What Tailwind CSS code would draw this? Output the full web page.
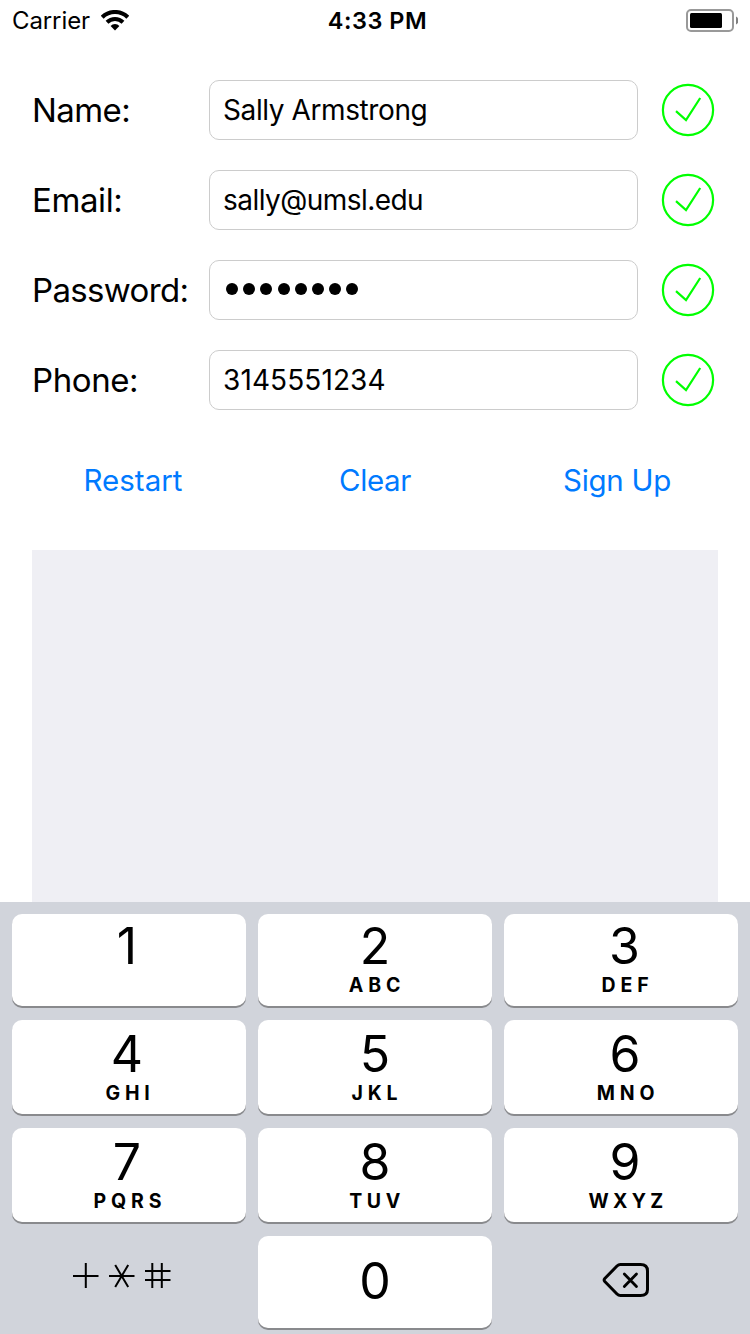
<!DOCTYPE html>
<html lang="en">
<head>
<meta charset="utf-8">
<title>Sign Up</title>
<script src="https://cdn.jsdelivr.net/npm/@tailwindcss/browser@4"></script>
</head>
<body class="flex h-[1334px] w-[750px] flex-col overflow-hidden bg-white font-['Inter','Liberation_Sans',sans-serif] text-black">
<header class="grid h-10 shrink-0 grid-cols-3 items-start pl-3 pr-3 text-[24px] leading-[42px]">
  <div class="flex items-start gap-[11px]">
    <span class="tracking-[-0.1px]">Carrier</span>
    <svg class="mt-[9.5px] h-[21px] w-[28px]" viewBox="0 0 28 21" fill="none" stroke="#000"><path d="M1.2 7.2A18.3 18.3 0 0 1 26.8 7.2" stroke-width="4.1"/><path d="M6 12.2A11.5 11.5 0 0 1 22 12.2" stroke-width="4"/><path d="M9.6 16A6 6 0 0 1 18.4 16L14 20.4Z" fill="#000" stroke="none"/></svg>
  </div>
  <div class="pl-[5px] text-center text-[23.5px] font-semibold leading-[41px] tracking-[0.5px]">4:33 PM</div>
  <svg class="mt-2 h-6 w-[54px] justify-self-end" viewBox="0 0 54 24"><rect x="3" y="2" width="46" height="21" rx="4" fill="none" stroke="#999" stroke-width="2"/><rect x="6" y="5" width="32" height="15" rx="1.5"/><path d="M52 8.5Q54.7 10 54.7 12.5T52 16.5Z" fill="#808080"/></svg>
</header>
<main class="flex h-[862px] shrink-0 flex-col px-8 pt-10">
  <div class="flex flex-col gap-[30px]">
    <div class="flex h-[60px] items-center">
      <div class="w-[177px] pt-0.5 text-[33px] tracking-[-0.6px]">Name:</div>
      <div class="flex h-[60px] w-[429px] items-center rounded-[10px] border border-[#ccc] px-[13px] text-[28px] tracking-[-0.4px]"><span>Sally Armstrong</span></div>
      <svg class="ml-[23px] size-[54px]" viewBox="0 0 54 54" fill="none" stroke="#0f0" stroke-width="2.2"><circle cx="27" cy="27" r="25.1"/><path d="M15 28.2L25 37L39.2 15"/></svg>
    </div>
    <div class="flex h-[60px] items-center">
      <div class="w-[177px] pt-0.5 text-[33px] tracking-[-0.4px]">Email:</div>
      <div class="flex h-[60px] w-[429px] items-center rounded-[10px] border border-[#ccc] px-[13px] text-[28px] tracking-[-0.55px]"><span>sally@umsl.edu</span></div>
      <svg class="ml-[23px] size-[54px]" viewBox="0 0 54 54" fill="none" stroke="#0f0" stroke-width="2.2"><circle cx="27" cy="27" r="25.1"/><path d="M15 28.2L25 37L39.2 15"/></svg>
    </div>
    <div class="flex h-[60px] items-center">
      <div class="w-[177px] pt-0.5 text-[33px] tracking-[-0.65px]">Password:</div>
      <div class="flex h-[60px] w-[429px] items-center gap-[5.2px] rounded-[10px] border border-[#ccc] px-4 pb-0.5">
        <i class="size-3 rounded-full bg-black"></i><i class="size-3 rounded-full bg-black"></i><i class="size-3 rounded-full bg-black"></i><i class="size-3 rounded-full bg-black"></i><i class="size-3 rounded-full bg-black"></i><i class="size-3 rounded-full bg-black"></i><i class="size-3 rounded-full bg-black"></i><i class="size-3 rounded-full bg-black"></i>
      </div>
      <svg class="ml-[23px] size-[54px]" viewBox="0 0 54 54" fill="none" stroke="#0f0" stroke-width="2.2"><circle cx="27" cy="27" r="25.1"/><path d="M15 28.2L25 37L39.2 15"/></svg>
    </div>
    <div class="flex h-[60px] items-center">
      <div class="w-[177px] pt-0.5 text-[33px] tracking-[-0.4px]">Phone:</div>
      <div class="flex h-[60px] w-[429px] items-center rounded-[10px] border border-[#ccc] px-[13px] text-[28px] tracking-[0.1px]"><span>3145551234</span></div>
      <svg class="ml-[23px] size-[54px]" viewBox="0 0 54 54" fill="none" stroke="#0f0" stroke-width="2.2"><circle cx="27" cy="27" r="25.1"/><path d="M15 28.2L25 37L39.2 15"/></svg>
    </div>
  </div>
  <div class="mt-10 -mx-[20px] grid h-[60px] grid-cols-3 items-center text-center text-[29.5px] text-[#007aff]">
    <span>Restart</span><span class="tracking-[-0.4px]">Clear</span><span class="tracking-[-0.3px]">Sign Up</span>
  </div>
  <div class="mt-10 flex-1 bg-[#efeff4]"></div>
</main>
<section class="grid h-[432px] shrink-0 grid-cols-3 grid-rows-[92px_94px_94px_92px] gap-x-3 bg-[#d1d4db] px-3 pt-3 text-center [row-gap:14px]">
  <div class="rounded-[10px] bg-white pt-1.5 pr-1 shadow-[0_2px_0_#898a8d]"><div class="text-[50px] leading-[52px]">1</div></div>
  <div class="rounded-[10px] bg-white pt-1.5 shadow-[0_2px_0_#898a8d]"><div class="text-[50px] leading-[52px]">2</div><div class="pl-1 text-[19.5px] font-bold leading-[27px] tracking-[4.8px]">ABC</div></div>
  <div class="rounded-[10px] bg-white pt-1.5 pl-[7px] shadow-[0_2px_0_#898a8d]"><div class="text-[50px] leading-[52px]">3</div><div class="pl-[6px] text-[19.5px] font-bold leading-[27px] tracking-[4.8px]">DEF</div></div>
  <div class="rounded-[10px] bg-white pt-2 pr-1 shadow-[0_2px_0_#898a8d]"><div class="text-[50px] leading-[52px]">4</div><div class="pl-[6px] text-[19.5px] font-bold leading-[27px] tracking-[4.8px]">GHI</div></div>
  <div class="rounded-[10px] bg-white pt-2 shadow-[0_2px_0_#898a8d]"><div class="text-[50px] leading-[52px]">5</div><div class="pl-1 text-[19.5px] font-bold leading-[27px] tracking-[4.8px]">JKL</div></div>
  <div class="rounded-[10px] bg-white pt-2 pl-[8px] shadow-[0_2px_0_#898a8d]"><div class="text-[50px] leading-[52px]">6</div><div class="pl-[6px] text-[19.5px] font-bold leading-[27px] tracking-[4.8px]">MNO</div></div>
  <div class="rounded-[10px] bg-white pt-2 pr-1 shadow-[0_2px_0_#898a8d]"><div class="text-[50px] leading-[52px]">7</div><div class="pl-[6px] text-[19.5px] font-bold leading-[27px] tracking-[4.9px]">PQRS</div></div>
  <div class="rounded-[10px] bg-white pt-2 shadow-[0_2px_0_#898a8d]"><div class="text-[50px] leading-[52px]">8</div><div class="pl-1 text-[19.5px] font-bold leading-[27px] tracking-[4.6px]">TUV</div></div>
  <div class="rounded-[10px] bg-white pt-2 pl-[8px] shadow-[0_2px_0_#898a8d]"><div class="text-[50px] leading-[52px]">9</div><div class="pl-[6px] text-[19.5px] font-bold leading-[27px] tracking-[4.3px]">WXYZ</div></div>
  <div class="flex justify-center pt-[26px] pr-[14px]"><svg class="h-[27px] w-[98px]" viewBox="0 0 98 27" fill="none" stroke="#000" stroke-width="2"><path d="M0 14H25.5M12.8 1V26M36 14H61.5M42.2 3L55.2 25M55.2 3L42.2 25M72 9H97.5M72 18H97.5M79.3 1V26M88.8 1V26"/></svg></div>
  <div class="rounded-[10px] bg-white shadow-[0_2px_0_#898a8d]"><div class="text-[50px] leading-[90px]">0</div></div>
  <div class="flex justify-center pt-[26px] pl-[10px]"><svg class="h-9 w-[48px]" viewBox="0 0 48 36" fill="none" stroke="#000" stroke-width="3" stroke-linecap="round" stroke-linejoin="round"><path d="M18.5 2.5H38.5Q45.5 2.5 45.5 9V27.5Q45.5 33.5 38.5 33.5H18.5Q16.5 33.5 15 32L2.8 19.5Q1.5 18 2.8 16.5L15 4Q16.5 2.5 18.5 2.5Z"/><path d="M22.3 12L34.5 24.5M34.5 12L22.3 24.5" stroke-width="2.8"/></svg></div>
</section>
</body>
</html>
